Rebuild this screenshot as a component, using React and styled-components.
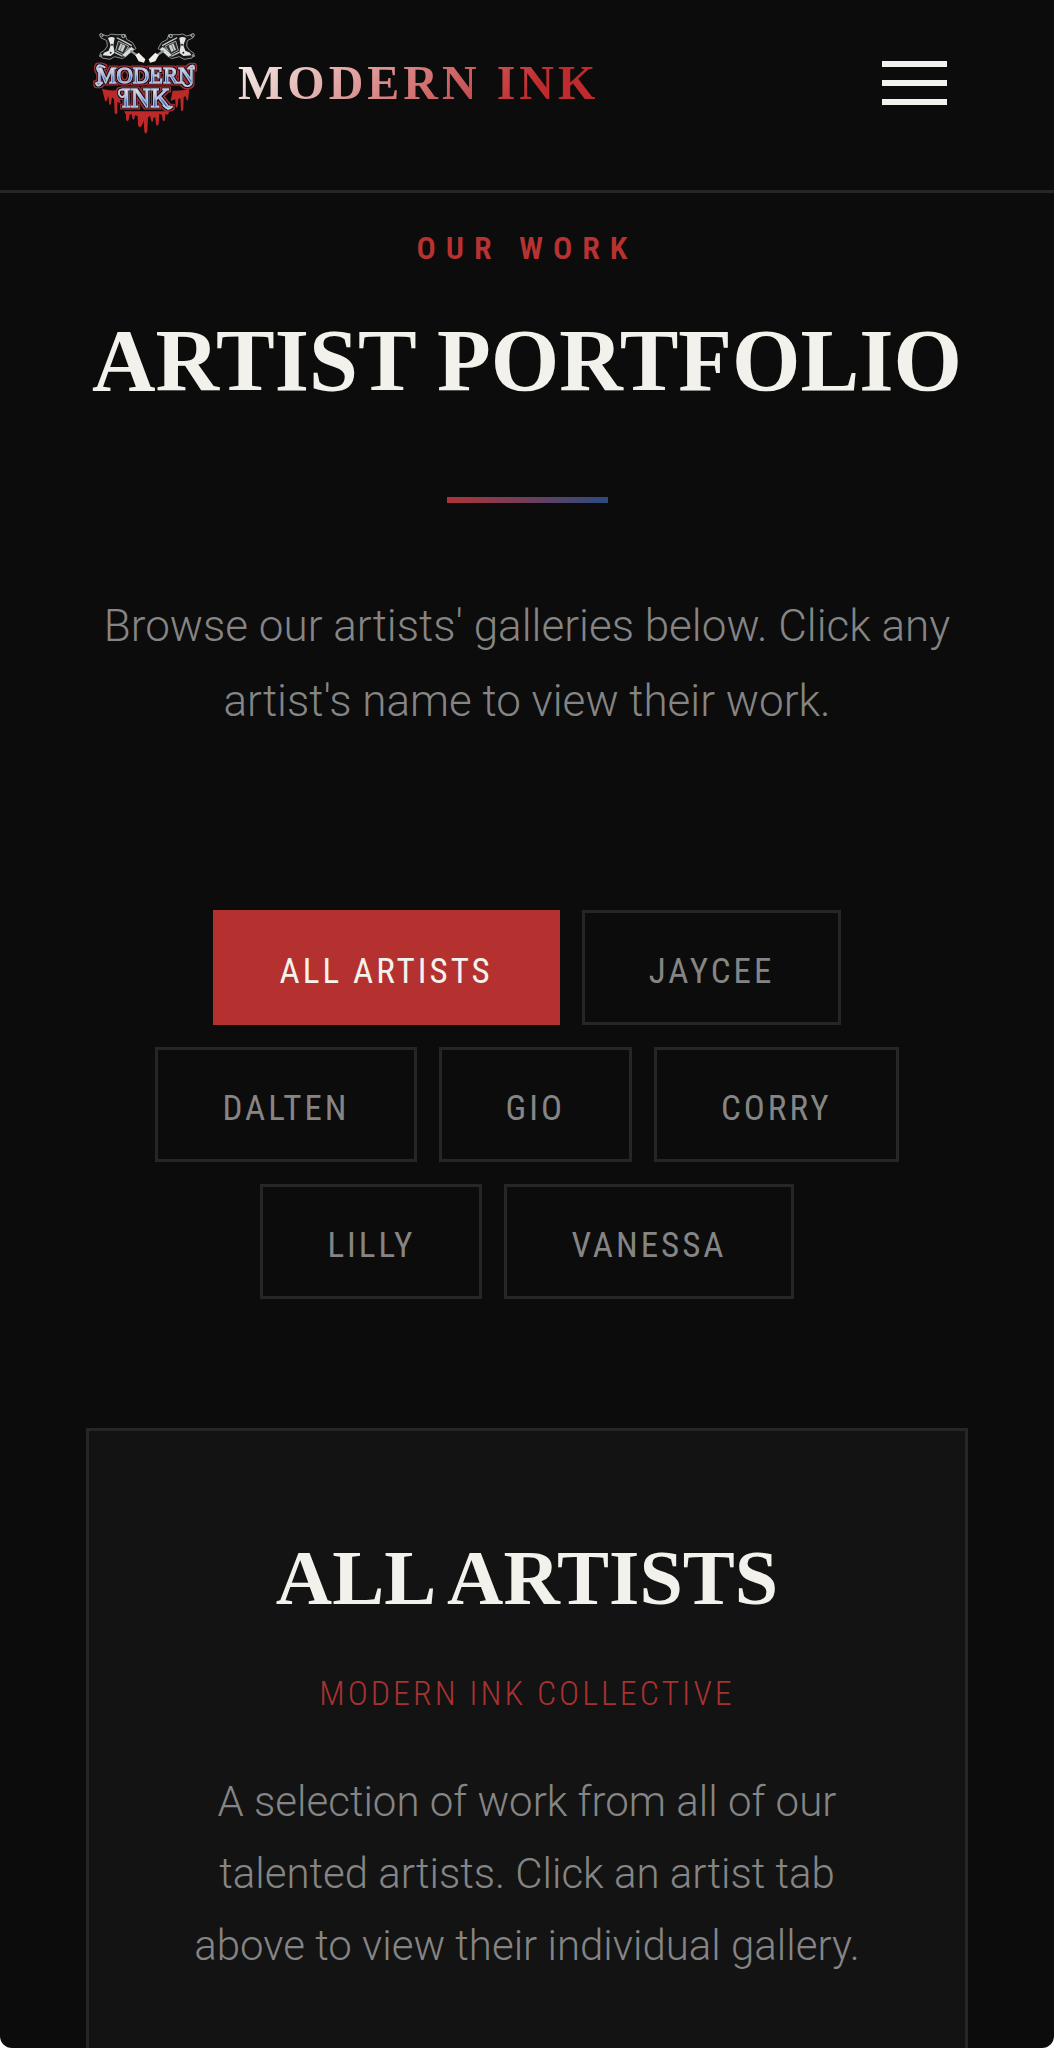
import { useState } from "react";
import styled, { createGlobalStyle } from "styled-components";

const artists = ["All Artists", "Jaycee", "Dalten", "Gio", "Corry", "Lilly", "Vanessa"];

function TattooMachine() {
    return (
        <g strokeLinejoin="round" strokeLinecap="round">
            <path d="M62 42 L82 48 Q92 38 108 44 L136 44 L140 58 L158 68 L168 86 L150 96 L128 116 L104 110 L90 118 L66 114 L60 100 L74 90 L82 78 L80 62 L64 54 Z" fill="#161616" stroke="#8d8f8f" strokeWidth="3" />
            <path d="M84 54 Q96 48 104 54 L100 76 L104 98 L92 108 L68 106 L72 98 L86 92 L92 76 Z" fill="#e4e6e4" />
            <path d="M112 54 L132 64 L154 76 M106 98 L126 108 L148 84" fill="none" stroke="#c9cccc" strokeWidth="4" />
            <path d="M116 64 L146 78 L130 104 L108 92 Z" fill="#2b2e2e" stroke="#a9adad" strokeWidth="3" />
            <path d="M122 70 L136 77 L128 96 L114 89 Z" fill="#c6cccc" />
            <path d="M128 72 L120 92" stroke="#555" strokeWidth="2" />
            <path d="M154 80 L164 88 L136 112 L126 106 Z" fill="#d9dbd9" stroke="#444" strokeWidth="2" />
            <path d="M154 94 L174 108" stroke="#8e9292" strokeWidth="7" />
            <path d="M166 106 L176 98 L196 118 L192 128 L176 124 Z" fill="#f3efe8" />
            <circle cx="64" cy="46" r="5" fill="#333" stroke="#a5a8a8" strokeWidth="3" />
            <circle cx="130" cy="48" r="5" fill="#222" stroke="#b8bbbb" strokeWidth="3" />
            <circle cx="62" cy="107" r="5" fill="#888" />
            <circle cx="96" cy="74" r="3" fill="#222" />
            <circle cx="92" cy="98" r="3" fill="#222" />
        </g>
    );
}

function Logo() {
    return (
        <StyledLogo viewBox="18 0 348 375" role="img" aria-label="Modern Ink logo">
            <defs>
                <linearGradient id="letters" x1="0" y1="0" x2="0" y2="1">
                    <stop offset="0.25" stopColor="#f1ece9" />
                    <stop offset="0.48" stopColor="#9eb2d8" />
                    <stop offset="0.6" stopColor="#466fb9" />
                    <stop offset="0.8" stopColor="#355da8" />
                </linearGradient>
                <filter id="outline" x="-10%" y="-10%" width="120%" height="120%">
                    <feMorphology in="SourceAlpha" operator="dilate" radius="6" result="outer" />
                    <feFlood floodColor="#a53238" />
                    <feComposite in2="outer" operator="in" result="red" />
                    <feMorphology in="SourceAlpha" operator="dilate" radius="4" result="inner" />
                    <feFlood floodColor="#0c0c15" />
                    <feComposite in2="inner" operator="in" result="dark" />
                    <feMerge>
                        <feMergeNode in="red" />
                        <feMergeNode in="dark" />
                        <feMergeNode in="SourceGraphic" />
                    </feMerge>
                </filter>
            </defs>
            <TattooMachine />
            <g transform="translate(402 0) scale(-1 1)">
                <TattooMachine />
            </g>
            <path
                d="M66 206 Q88 214 114 210 L122 250 L112 246 L112 278 Q107 288 104 278 L102 238 L96 232 L93 252 Q89 258 87 250 L85 228 L80 242 Q75 248 74 238 Z"
                fill="#bd2929"
            />
            <path
                d="M328 206 Q304 214 278 212 L272 242 L286 238 L287 260 Q290 266 293 258 L295 238 L301 234 L303 270 Q307 278 310 268 L311 232 L316 228 L320 240 Q325 246 325 232 Z"
                fill="#bd2929"
            />
            <path
                d="M132 274 L268 274 L264 284 L256 282 L255 300 Q251 308 248 300 L246 284 L238 282 L236 312 Q232 322 228 312 L226 292 L220 294 L219 304 Q214 308 213 300 L210 288 L204 292 L202 334 Q197 348 193 334 L191 302 L186 316 Q178 328 174 314 L173 288 L165 286 L163 296 Q159 302 157 294 L155 282 L149 284 L146 300 Q141 308 138 298 L138 284 Z"
                fill="#bd2929"
            />
            <g filter="url(#outline)">
                <g fill="none" stroke="#c9cce0" strokeWidth="5" strokeLinecap="round">
                    <path d="M74 142 Q50 128 52 148 Q56 162 66 152" />
                    <path d="M66 188 Q54 204 48 190" />
                    <path d="M324 146 Q342 128 342 146" />
                    <path d="M306 186 Q320 208 334 192" />
                    <path d="M136 210 Q112 204 118 224 Q126 238 134 226" />
                    <path d="M250 256 Q264 274 276 260" />
                </g>
                <g
                    fill="url(#letters)"
                    stroke="#b9c3e0"
                    strokeWidth="3"
                    fontFamily="'Liberation Serif', serif"
                    textAnchor="middle"
                >
                    <text x="196" y="188" fontSize="68">MODERN</text>
                    <text x="198" y="262" fontSize="82">INK</text>
                </g>
            </g>
        </StyledLogo>
    );
}

export default function App() {
    const [selected, setSelected] = useState("All Artists");

    return (
        <StyledScreen>
            <GlobalStyle />
            <StyledHeader>
                <StyledBrand href="#home">
                    <Logo />
                    <StyledBrandName>MODERN INK</StyledBrandName>
                </StyledBrand>
                <StyledMenuButton type="button" aria-label="Open menu">
                    <StyledMenuLine />
                    <StyledMenuLine />
                    <StyledMenuLine />
                </StyledMenuButton>
            </StyledHeader>

            <StyledMain>
                <StyledEyebrow>OUR WORK</StyledEyebrow>
                <StyledTitle>ARTIST PORTFOLIO</StyledTitle>
                <StyledDivider />
                <StyledIntro>
                    Browse our artists' galleries below. Click any artist's name to view their work.
                </StyledIntro>

                <StyledTabs>
                    {artists.map((a) => (
                        <StyledTab
                            key={a}
                            type="button"
                            $active={a === selected}
                            aria-pressed={a === selected}
                            onClick={() => setSelected(a)}
                        >
                            {a.toUpperCase()}
                        </StyledTab>
                    ))}
                </StyledTabs>

                <StyledCard>
                    <StyledCardTitle>ALL ARTISTS</StyledCardTitle>
                    <StyledCardRole>MODERN INK COLLECTIVE</StyledCardRole>
                    <StyledCardText>
                        A selection of work from all of our talented artists. Click an artist tab above to view
                        their individual gallery.
                    </StyledCardText>
                </StyledCard>
            </StyledMain>
        </StyledScreen>
    );
}

const condensed = `"Roboto Condensed", "Liberation Sans Narrow", "Liberation Sans", sans-serif`;
const decorative = `"Liberation Serif", serif`;

const GlobalStyle = createGlobalStyle`
    * {
        box-sizing: border-box;
    }
    body {
        margin: 0;
        background: #ffffff;
        font-family: Roboto, sans-serif;
    }
    h1, h2, p {
        margin: 0;
    }
`

const StyledScreen = styled.div`
    height: 100vh;
    overflow-y: auto;
    scrollbar-width: none;
    background: #0c0c0c;
    border-radius: 0 0 12px 12px;
`

const StyledHeader = styled.header`
    display: flex;
    align-items: center;
    justify-content: space-between;
    padding: 20px 86px 45px;
    border-bottom: 3px solid #262626;
`

const StyledBrand = styled.a`
    display: flex;
    align-items: center;
    gap: 36px;
    text-decoration: none;
`

const StyledLogo = styled.svg`
    display: block;
    width: 116px;
    height: 125px;
`

const StyledBrandName = styled.span`
    font-family: ${decorative};
    font-size: 48px;
    font-weight: 700;
    line-height: 56px;
    letter-spacing: 4px;
    color: transparent;
    background: linear-gradient(135deg, #f4f3ee 0%, #bf2a2c 80%);
    background-clip: text;
`

const StyledMenuButton = styled.button`
    display: flex;
    flex-direction: column;
    gap: 13px;
    padding: 21px;
    border: none;
    background: none;
    cursor: pointer;
`

const StyledMenuLine = styled.span`
    width: 65px;
    height: 6px;
    background: #f4f2ec;
`

const StyledMain = styled.main`
    display: flex;
    flex-direction: column;
    align-items: center;
    padding: 35px 86px 86px;
    text-align: center;
`

const StyledEyebrow = styled.p`
    font-family: ${condensed};
    font-size: 32px;
    font-weight: 600;
    line-height: 40px;
    letter-spacing: 10px;
    color: #b83232;
`

const StyledTitle = styled.h1`
    margin-top: 41px;
    font-family: ${decorative};
    font-size: 88px;
    font-weight: 700;
    line-height: 104px;
    color: #f2f1eb;
`

const StyledDivider = styled.div`
    width: 161px;
    height: 6px;
    margin: 84px 0 86px;
    background: linear-gradient(90deg, #b03338, #2c4a80);
`

const StyledIntro = styled.p`
    font-size: 44px;
    font-weight: 300;
    line-height: 75px;
    color: #858585;
`

const StyledTabs = styled.div`
    display: flex;
    flex-wrap: wrap;
    justify-content: center;
    gap: 22px;
    margin: 171px 0 129px;
`

const StyledTab = styled.button`
    padding: 36px 64px 28px;
    border: 3px solid ${props => props.$active ? "#b5312f" : "#262626"};
    background: ${props => props.$active ? "#b5312f" : "transparent"};
    color: ${props => props.$active ? "#f4f2ec" : "#858585"};
    font-family: ${condensed};
    font-size: 35px;
    line-height: 45px;
    letter-spacing: 3px;
    cursor: pointer;
`

const StyledCard = styled.section`
    align-self: stretch;
    padding: 102px 86px;
    border: 3px solid #262626;
    background: #131313;
`

const StyledCardTitle = styled.h2`
    font-family: ${decorative};
    font-size: 78px;
    font-weight: 700;
    line-height: 90px;
    color: #f2f1eb;
`

const StyledCardRole = styled.p`
    margin: 50px 0 53px;
    font-family: ${condensed};
    font-size: 34px;
    font-weight: 300;
    line-height: 40px;
    letter-spacing: 3px;
    color: #a83232;
`

const StyledCardText = styled.p`
    font-size: 42px;
    font-weight: 300;
    line-height: 72px;
    color: #858585;
`
